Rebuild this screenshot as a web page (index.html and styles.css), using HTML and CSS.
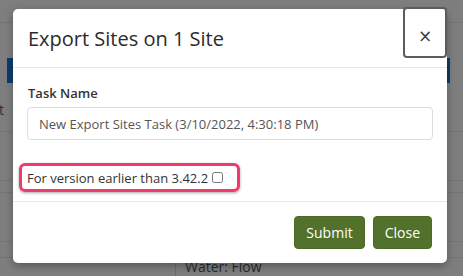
FILE: index.html
```html
<!DOCTYPE html>
<html lang="en">
<head>
    <meta charset="UTF-8">
    <meta name="viewport" content="width=device-width, initial-scale=1.0">
    <title>Export Sites</title>
    <link rel="stylesheet" href="styles.css">
</head>
<body>
    <!-- dimmed page behind the dialog -->
    <div class="page">
        <div class="row row-top"></div>
        <div class="row row-gap"></div>
        <div class="band"></div>
        <div class="row row-tall"><span class="cut">t</span></div>
        <div class="row row-tall"></div>
        <div class="row row-thin"></div>
        <div class="row row-tall"></div>
        <div class="row row-small"></div>
        <div class="row row-last">
            <div class="cell cell-left"></div>
            <div class="cell cell-right">Water: Flow</div>
        </div>
    </div>

    <div class="modal">
        <div class="modal-header">
            <h4 class="modal-title">Export Sites on 1 Site</h4>
            <button class="close" type="button">&times;</button>
        </div>

        <div class="modal-body">
            <label class="field-label" for="taskName">Task Name</label>
            <input class="field-input" type="text" id="taskName" value="New Export Sites Task (3/10/2022, 4:30:18 PM)">

            <div class="highlight">
                <label class="check-label" for="oldVersion">For version earlier than 3.42.2</label>
                <input class="check" type="checkbox" id="oldVersion">
            </div>
        </div>

        <div class="modal-footer">
            <button class="btn" type="button">Submit</button>
            <button class="btn" type="button">Close</button>
        </div>
    </div>
</body>
</html>
```

FILE: styles.css
```css
* {
    margin: 0;
    padding: 0;
    box-sizing: border-box;
}

body {
    font-family: "Open Sans", "Noto Sans", Arial, sans-serif;
    background-color: #7e7e7e;
    width: 463px;
    height: 276px;
    overflow: hidden;
    position: relative;
}

/* background page, seen through the overlay */
.page {
    display: flex;
    flex-direction: column;
    height: 276px;
}

.row {
    border-bottom: 1px solid #747474;
    flex-shrink: 0;
}

.row-top {
    height: 23px;
}

.row-gap {
    height: 35px;
    border-bottom: none;
}

.band {
    height: 35px;
    margin: 0 13px 0 7px;
    background-color: #0c3c6e;
}

.row-tall {
    height: 49px;
}

.row-thin {
    height: 12px;
}

.row-small {
    height: 16px;
}

.cut {
    display: block;
    width: 4px;
    overflow: hidden;
    direction: rtl;
    font-size: 14px;
    color: #2e2e2e;
    margin-top: 17px;
}

.row-last {
    display: flex;
    flex: 1;
    border-bottom: none;
}

.cell-left {
    width: 176px;
    border-right: 1px solid #6e6e6e;
}

.cell-right {
    padding: 0 0 0 9px;
    font-size: 14px;
    line-height: 18px;
    color: #2a2a2a;
}

/* dialog */
.modal {
    position: absolute;
    left: 13px;
    top: 9px;
    width: 434px;
    height: 254px;
    background: white;
    border-radius: 5px;
    box-shadow: 0 3px 9px rgba(0, 0, 0, 0.3);
    display: flex;
    flex-direction: column;
}

.modal-header {
    height: 59px;
    display: flex;
    justify-content: space-between;
    align-items: center;
    border-bottom: 1px solid #e8e8e8;
    padding-left: 15px;
}

.modal-title {
    font-size: 20px;
    font-weight: normal;
    color: #2b2b2b;
    margin-top: 1px;
}

.close {
    align-self: flex-start;
    margin-top: -2px;
    width: 44px;
    height: 51px;
    background: white;
    border: 2px solid #5c5c5c;
    border-radius: 4px;
    font-family: "DejaVu Sans", sans-serif;
    font-size: 17px;
    font-weight: normal;
    line-height: 1;
    color: #3e3e3e;
    padding-top: 7px;
}

.modal-body {
    height: 133px;
    padding: 16px 14px 0 14px;
}

.field-label {
    display: block;
    font-size: 13px;
    font-weight: 600;
    line-height: 18px;
    color: #333;
    margin-bottom: 5px;
    padding-left: 1px;
}

.field-input {
    display: block;
    width: 100%;
    height: 33px;
    padding: 0 11px;
    font-family: inherit;
    font-size: 13px;
    color: #555;
    border: 1px solid #ddd;
    border-radius: 4px;
}

.highlight {
    display: flex;
    align-items: center;
    width: 221px;
    height: 29px;
    margin: 23px 0 0 -8px;
    padding-left: 5px;
    border: 3px solid #f03a6c;
    border-radius: 6px;
    box-shadow: 0 1px 3px rgba(0, 0, 0, 0.35);
}

.check-label {
    font-size: 13px;
    color: #333;
}

.check {
    width: 11px;
    height: 11px;
    margin-left: 4px;
}

.modal-footer {
    border-top: 1px solid #e8e8e8;
    padding: 14px 15px;
    display: flex;
    justify-content: flex-end;
    gap: 8px;
}

.btn {
    height: 33px;
    padding: 0 11px;
    font-family: inherit;
    font-size: 14px;
    color: white;
    background-color: #52722b;
    border: 1px solid #4b6a26;
    border-radius: 4px;
}
```
